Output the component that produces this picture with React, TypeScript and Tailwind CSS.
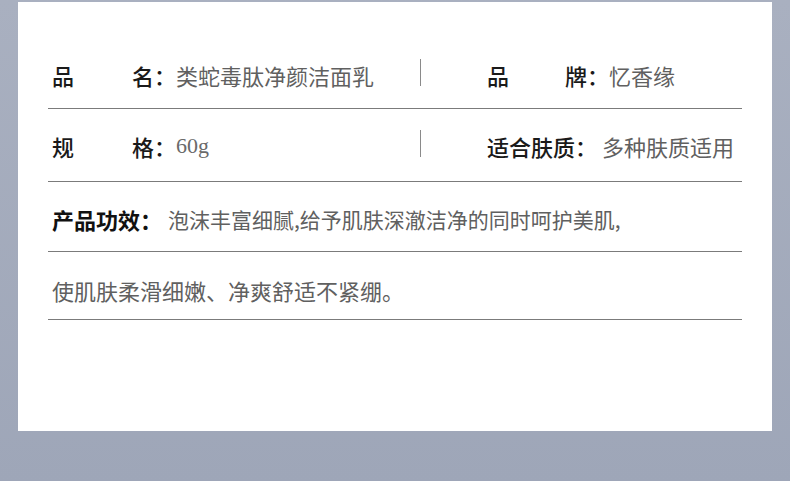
import React from "react";

const cjk = { fontFamily: '"Noto Sans CJK SC", "Noto Sans", sans-serif' };

function Divider() {
  return <div className="w-px h-[27px] bg-[#8a8a8a] -mt-[5px] shrink-0" />;
}

function HLine() {
  return <div className="h-px w-full bg-[#7b7b7b]" />;
}

export default function App() {
  return (
    <div
      className="w-[790px] h-[481px] bg-gradient-to-b from-[#a9b0c0] to-[#9ea6b8] pt-[2px] pl-[18px]"
      style={cjk}
    >
      <div className="w-[754px] h-[429px] bg-white pl-[30px]">
        <div className="w-[694px] text-[22px] leading-[22px]">
          {/* Row 1 */}
          <div className="flex items-start h-[106px] pt-[62px]">
            <div className="w-[372px] flex pl-[4px]">
              <div className="w-[124px] flex justify-between font-medium text-[#1a1a1a]">
                <span>品</span>
                <span>名：</span>
              </div>
              <span className="text-[#606060]">类蛇毒肽净颜洁面乳</span>
            </div>
            <Divider />
            <div className="flex pl-[66px]">
              <div className="w-[122px] flex justify-between font-medium text-[#1a1a1a]">
                <span>品</span>
                <span>牌：</span>
              </div>
              <span className="text-[#606060]">忆香缘</span>
            </div>
          </div>
          <HLine />
          {/* Row 2 */}
          <div className="flex items-start h-[72px] pt-[26px]">
            <div className="w-[372px] flex pl-[4px]">
              <div className="w-[124px] flex justify-between font-medium text-[#1a1a1a]">
                <span>规</span>
                <span>格：</span>
              </div>
              <span
                className="text-[#6a6a6a]"
                style={{ fontFamily: '"Liberation Serif", serif' }}
              >
                60g
              </span>
            </div>
            <Divider />
            <div className="flex pl-[66px]">
              <span className="font-medium text-[#1a1a1a]">适合肤质：</span>
              <span className="ml-[5px] text-[#606060]">多种肤质适用</span>
            </div>
          </div>
          <HLine />
          {/* Row 3 */}
          <div className="flex items-start h-[69px] pt-[26px] pl-[4px]">
            <span className="font-bold text-[#111]">产品功效：</span>
            <span className="ml-[6px] text-[21px] text-[#606060]">
              泡沫丰富细腻,给予肌肤深澈洁净的同时呵护美肌,
            </span>
          </div>
          <HLine />
          {/* Row 4 */}
          <div className="flex items-start h-[67px] pt-[27px] pl-[4px]">
            <span className="text-[#606060]">使肌肤柔滑细嫩、净爽舒适不紧绷。</span>
          </div>
          <HLine />
        </div>
      </div>
    </div>
  );
}
